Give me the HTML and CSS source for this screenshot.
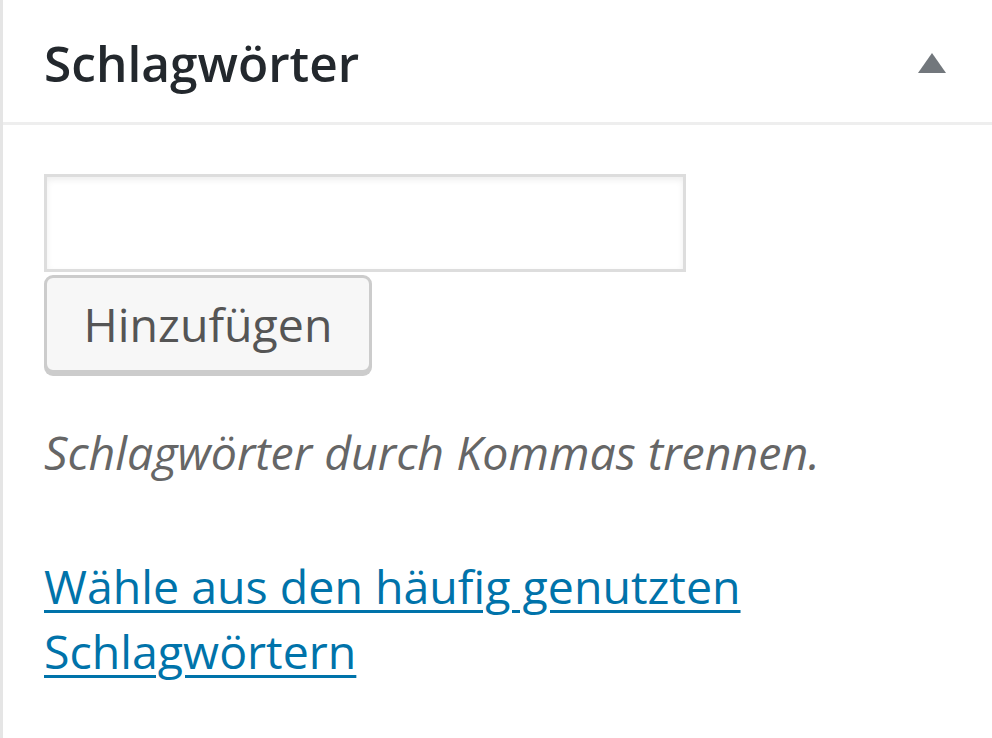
FILE: index.html
```html
<!DOCTYPE html>
<html lang="de">
<head>
<meta charset="utf-8">
<link rel="stylesheet" href="styles.css">
</head>
<body>
<div class="postbox">
  <div class="hndle">
    <h2 class="title">Schlagwörter</h2>
    <span class="toggle"></span>
  </div>
  <div class="inside">
    <input class="newtag" type="text" aria-label="Neues Schlagwort">
    <button class="button" type="button">Hinzufügen</button>
    <p class="howto">Schlagwörter durch Kommas trennen.</p>
    <p class="cloud"><a href="#">Wähle aus den häufig genutzten Schlagwörtern</a></p>
  </div>
</div>
</body>
</html>
```
FILE: styles.css
```css
html, body {
  margin: 0;
  padding: 0;
  background: #fff;
}
body {
  font-family: "Open Sans", "Noto Sans", sans-serif;
  width: 992px;
  height: 738px;
  overflow: hidden;
}
.postbox {
  border-left: 3px solid #e5e5e5;
  height: 738px;
  box-sizing: border-box;
}
.hndle {
  display: flex;
  align-items: flex-start;
  justify-content: space-between;
  height: 125px;
  border-bottom: 3px solid #eeeeee;
  padding: 38px 46px 0 41px;
  box-sizing: border-box;
}
.title {
  margin: 0;
  font-size: 49.6px;
  font-weight: 600;
  color: #23282d;
  line-height: 50px;
}
.toggle {
  width: 0;
  height: 0;
  border-left: 14px solid transparent;
  border-right: 14px solid transparent;
  border-bottom: 20px solid #72777c;
  margin-top: 15px;
}
.inside {
  padding: 49px 0 0 41px;
}
.newtag {
  display: block;
  width: 642px;
  height: 98px;
  box-sizing: border-box;
  margin: 0;
  border: 3px solid #dddddd;
  box-shadow: inset 0 3px 6px rgba(0,0,0,0.07);
  background: #fff;
}
.button {
  display: block;
  margin: 3px 0 0 0;
  width: 328px;
  height: 98px;
  box-sizing: border-box;
  border: 3px solid #cccccc;
  border-radius: 9px;
  background: #f7f7f7;
  box-shadow: 0 3px 0 #cccccc;
  font-family: "Open Sans", "Noto Sans", sans-serif;
  font-size: 46.5px;
  color: #555555;
  padding: 0;
}
.howto {
  margin: 47px 0 0 0;
  font-style: italic;
  font-size: 46.5px;
  color: #666666;
  line-height: 64px;
}
.cloud {
  margin: 70px 0 0 0;
  font-size: 46.5px;
  line-height: 65px;
  width: 760px;
}
.cloud a {
  color: #0073aa;
  text-decoration: underline;
  text-decoration-thickness: 3px;
  text-underline-offset: 6px;
}
```
